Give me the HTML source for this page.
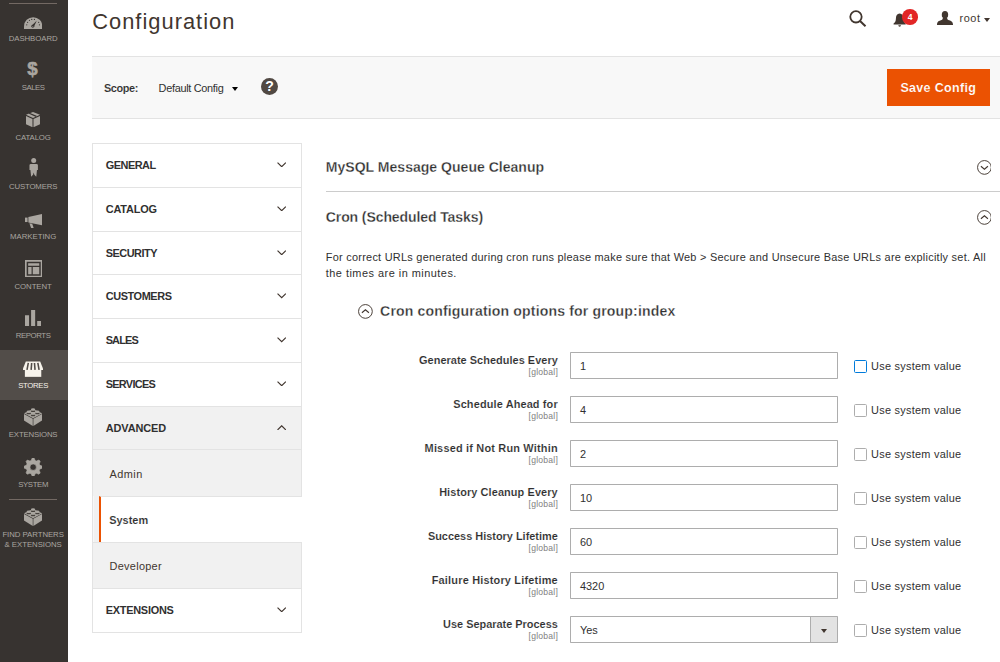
<!DOCTYPE html>
<html lang="en">
<head>
<meta charset="utf-8">
<title>Configuration / Settings / Stores / Magento Admin</title>
<style>
*{box-sizing:border-box;margin:0;padding:0}
html,body{width:1000px;height:662px;overflow:hidden;background:#fff}
body{font-family:"Liberation Sans","DejaVu Sans",sans-serif;color:#41362f;font-size:14px;line-height:1.36}
#root{position:absolute;left:0;top:0;width:1280px;height:848px;zoom:.78125;background:#fff;overflow:hidden}
.abs{position:absolute}
/* ---------- sidebar ---------- */
#menu{position:absolute;left:0;top:0;width:87px;height:848px;background:#373330}
#menu .it{position:absolute;left:0;width:87px;height:63.43px;text-align:center;color:#aaa6a0}
#menu .it.on{background:#524d49;color:#f7f3eb}
#menu .it svg{position:absolute;fill:#aaa6a0}
#menu .it.on svg{fill:#f7f3eb}
#menu .it span{position:absolute;left:0;width:84.8px;top:40.3px;font-size:10px;line-height:13px;text-transform:uppercase;white-space:nowrap}
#menu .it .dl{position:absolute;left:0;width:83.4px;top:6.6px;font-size:24px;line-height:28px;font-weight:700;text-align:center;-webkit-text-stroke:.7px #aaa6a0}
#menu .sep{position:absolute;left:11.6px;width:61.6px;height:1px;background:#736963}
/* ---------- header ---------- */
#title{position:absolute;left:118px;top:8px;font-size:28px;line-height:40px;font-weight:400;color:#41362f;letter-spacing:1.3px;white-space:nowrap}
/* ---------- action bar ---------- */
#bar{position:absolute;left:118px;top:72px;width:1170px;height:80px;background:#f8f8f8;border-top:1px solid #e3e3e3;border-bottom:1px solid #e3e3e3}
#save{-webkit-text-stroke:.2px #eb5202;position:absolute;left:1135px;top:88px;width:132px;height:48px;background:#eb5202;color:#fff;font-weight:700;font-size:16px;line-height:50px;text-align:center;letter-spacing:.4px}
/* ---------- config nav ---------- */
#nav{position:absolute;left:118px;top:183px;width:269px;border:1px solid #e3e3e3;background:#fff}
#nav .t{position:relative;height:56px;border-top:1px solid #e3e3e3;font-weight:700;font-size:14px;line-height:55px;padding-left:16px;color:#303030;letter-spacing:-.45px}
#nav .t:first-child{border-top:0;height:55px}
#nav .t svg{position:absolute;left:235px;top:23px;width:12px;height:7px;fill:none;stroke:#41362f;stroke-width:1.5}
#nav .t.open{background:#f1f1f1}
#nav .s{position:relative;background:#f1f1f1;border-top:1px solid #e3e3e3;height:59px;line-height:63.5px;padding-left:21px;font-size:14px;color:#41362f}
#nav .s.act{-webkit-text-stroke:.15px #fff;box-shadow:-7px 0 0 #f1f1f1;background:#fff;margin-left:7px;margin-right:-1px;border-left:3px solid #eb5202;padding-left:11px;font-weight:700;color:#303030;height:60px;line-height:59px}
/* ---------- content ---------- */
.sect{-webkit-text-stroke:.35px #fff;position:absolute;left:417px;font-size:18px;font-weight:700;color:#303030;line-height:24px;white-space:nowrap;letter-spacing:0}
.cir{position:absolute;width:18px;height:18px}
.cir circle{fill:#fff;stroke:#41362f;stroke-width:1.2}
.cir path{fill:none;stroke:#41362f;stroke-width:1.4}
#cmt{position:absolute;left:417px;top:319px;width:870px;font-size:14px;line-height:20.5px;color:#303030;letter-spacing:.33px;white-space:nowrap}
.row{position:absolute;left:417px;width:863px;height:44px}
.row .l{-webkit-text-stroke:.15px #fff;position:absolute;right:566px;top:.3px;text-align:right;font-weight:700;font-size:14px;line-height:19px;color:#303030;white-space:nowrap;letter-spacing:0}
.row .g{position:absolute;right:565.6px;top:19px;text-align:right;font-size:11px;line-height:15px;color:#808080;white-space:nowrap;letter-spacing:.3px}
.row .i{position:absolute;left:313px;top:0;width:343px;height:34.5px;border:1px solid #adadad;background:#fff;font-size:14px;line-height:34.6px;padding-left:11px;color:#303030;border-radius:1px}
.row .i b{position:absolute;right:0;top:0;bottom:0;width:35.5px;background:#e3e3e3;border-left:1px solid #adadad}
.row .i b:after{content:"";position:absolute;left:14px;top:14.5px;border:4.5px solid transparent;border-top:6px solid #41362f;border-bottom:0}
.row .c{position:absolute;left:676px;top:9.3px;width:17px;height:17px;border:1px solid #adadad;border-radius:2px;background:#fff}
.row .c.f{border-color:#007bdb}
.row .u{position:absolute;left:698px;top:8.4px;font-size:14px;line-height:20px;color:#303030;white-space:nowrap;letter-spacing:.33px}
</style>
</head>
<body>
<div id="root">

<div id="menu">
  <div class="sep" style="top:3.4px"></div>
  <div class="it" style="top:3.84px"><svg style="left:30.6px;top:17.900px;width:23.500px;height:16px" viewBox="0 0 24 16"><path d="M0 16v-4a12 12 0 0 1 24 0v4z"/><g fill="#373330"><circle cx="3.600" cy="10" r=".800"/><circle cx="4.700" cy="6.800" r=".800"/><circle cx="7.100" cy="4.200" r=".800"/><circle cx="10.100" cy="3" r=".800"/><circle cx="13.600" cy="3" r=".800"/><circle cx="19.200" cy="6.800" r=".800"/><circle cx="20.200" cy="10" r=".800"/><path d="M10.200 10.900L16.600 4.600 13 12.700z"/><circle cx="11.500" cy="11.900" r="1.900"/></g><ellipse cx="11.500" cy="12.100" rx="1" ry=".500"/></svg><span style="letter-spacing:-0.08px">Dashboard</span></div>
  <div class="it" style="top:67.27px"><b class="dl">$</b><span style="letter-spacing:-0.55px;top:39.1px">Sales</span></div>
  <div class="it" style="top:130.7px"><svg style="left:32.900px;top:12.400px;width:17.900px;height:19.500px" viewBox="0 0 19 20.700"><path d="M9.500 0L19 3.900 9.500 8.300 0 3.900z"/><path d="M0 5.300l8.800 4.100v11.300L0 16.500z"/><path d="M10.200 9.400L19 5.300v11.200l-8.800 4.200z"/><path d="M4.300 1.700l9.800 4.300" stroke="#373330" stroke-width="1.700"/></svg><span style="letter-spacing:-0.18px;top:39.1px">Catalog</span></div>
  <div class="it" style="top:194.13px"><svg style="left:36.7px;top:8.4px;width:12px;height:24px" viewBox="0 0 12 24"><circle cx="6" cy="3.300" r="3.200"/><path d="M.600 9.200Q.600 7.600 2.400 7.600H9.600Q11.400 7.600 11.400 9.200V15.500H10.200L9.300 24 6.800 21.500 6 18.500 5.200 21.500 2.700 24 1.800 15.500H.600z"/></svg><span style="letter-spacing:-0.23px;top:39.1px">Customers</span></div>
  <div class="it" style="top:257.56px"><svg style="left:31.9px;top:15.8px;width:22px;height:18.5px" viewBox="0 0 22 18.500"><path d="M4.300 3.900L22 0v14.600L4.300 10.900z"/><path d="M0 4.600h3.300v5.700H0z"/><path d="M5.600 11.700l3.600.800 1.900 5.400-3 .600z"/></svg><span style="letter-spacing:-0.03px;top:39.1px">Marketing</span></div>
  <div class="it" style="top:320.99px"><svg style="left:31.5px;top:11.4px;width:22.3px;height:22.3px" viewBox="0 0 22 22"><path d="M0 0h22v22H0zM2.100 2.100v17.800h17.800V2.100z" fill-rule="evenodd"/><path d="M4 4h14v3.300H4zM4 8.900h4.300V18H4zM9.800 8.900H18V18H9.800z"/></svg><span style="letter-spacing:-0.1px">Content</span></div>
  <div class="it" style="top:384.42px"><svg style="left:31.9px;top:12.1px;width:20.8px;height:21.2px" viewBox="0 0 20.800 21.200"><path d="M0 6.800h5.200v14.400H0zM7.800 0H13v21.200H7.800zM15.600 14.100h5.200v7.100h-5.200z"/></svg><span style="letter-spacing:-0.48px;top:39.1px">Reports</span></div>
  <div class="it on" style="top:447.85px;height:64.6px"><svg style="left:29.400px;top:14.400px;width:25.600px;height:20.300px" viewBox="0 0 25.600 20.300"><path d="M3.600.700h18.400l3.600 8.800v1.900H0V9.500z"/><path d="M2.400 11.300h21v9h-21z"/><g stroke="#524d49" stroke-width="2" fill="none"><path d="M6.800 2.500L5.100 11.400M11.100 2.500l-.700 8.900M14.700 2.500l.700 8.900M19 2.500l1.600 8.900"/></g></svg><span style="letter-spacing:-0.43px">Stores</span></div>
  <div class="it" style="top:511.28px"><svg style="left:30.6px;top:11.2px;width:23.2px;height:23px" viewBox="0 0 23.200 23"><path d="M11.600 1.200L23.200 6.800 11.600 13.100 0 6.800z"/><path d="M0 7.700l11.200 6.200V23L0 16z"/><path d="M12 13.900l11.200-6.200V16L12 23z"/><g fill="#46413d"><ellipse cx="11.600" cy="3.700" rx="2.900" ry="1.500"/><ellipse cx="6.100" cy="6.600" rx="2.900" ry="1.500"/><ellipse cx="17.100" cy="6.600" rx="2.900" ry="1.500"/><ellipse cx="11.600" cy="9.200" rx="2.900" ry="1.500"/></g><ellipse cx="11.600" cy="1.900" rx="2.700" ry="1.450"/><ellipse cx="6.100" cy="4.800" rx="2.700" ry="1.450"/><ellipse cx="17.100" cy="4.800" rx="2.700" ry="1.450"/><ellipse cx="11.600" cy="7.200" rx="2.700" ry="1.450"/><path d="M8.900 1.900h5.400v1.200H8.900zM3.400 4.800h5.400V6H3.400zM14.400 4.800h5.400V6h-5.400zM8.900 7.200h5.400v1.200H8.900z"/></svg><span style="letter-spacing:-0.22px;top:39.1px">Extensions</span></div>
  <div class="it" style="top:574.71px"><svg style="left:30.6px;top:11.7px;width:23.4px;height:23.4px" viewBox="0 0 23.400 23.400"><path fill-rule="evenodd" stroke="#aaa6a0" stroke-width=".8" stroke-linejoin="round" d="M9.10 3.29 L10.53 0.06 L12.87 0.06 L14.30 3.29 L15.81 3.92 L19.11 2.64 L20.76 4.29 L19.48 7.59 L20.11 9.10 L23.34 10.53 L23.34 12.87 L20.11 14.30 L19.48 15.81 L20.76 19.11 L19.11 20.76 L15.81 19.48 L14.30 20.11 L12.87 23.34 L10.53 23.34 L9.10 20.11 L7.59 19.48 L4.29 20.76 L2.64 19.11 L3.92 15.81 L3.29 14.30 L0.06 12.87 L0.06 10.53 L3.29 9.10 L3.92 7.59 L2.64 4.29 L4.29 2.64 L7.59 3.92Z M15.80 11.70 A4.1 4.1 0 1 0 7.60 11.70 A4.1 4.1 0 1 0 15.80 11.70Z"/></svg><span style="letter-spacing:-0.46px">System</span></div>
  <div class="sep" style="top:638.6px"></div>
  <div class="it" style="top:638.6px;height:76px"><svg style="left:30.6px;top:12.2px;width:23.2px;height:23px" viewBox="0 0 23.200 23"><path d="M11.600 1.200L23.200 6.800 11.600 13.100 0 6.800z"/><path d="M0 7.700l11.200 6.200V23L0 16z"/><path d="M12 13.900l11.200-6.200V16L12 23z"/><g fill="#46413d"><ellipse cx="11.600" cy="3.700" rx="2.900" ry="1.500"/><ellipse cx="6.100" cy="6.600" rx="2.900" ry="1.500"/><ellipse cx="17.100" cy="6.600" rx="2.900" ry="1.500"/><ellipse cx="11.600" cy="9.200" rx="2.900" ry="1.500"/></g><ellipse cx="11.600" cy="1.900" rx="2.700" ry="1.450"/><ellipse cx="6.100" cy="4.800" rx="2.700" ry="1.450"/><ellipse cx="17.100" cy="4.800" rx="2.700" ry="1.450"/><ellipse cx="11.600" cy="7.200" rx="2.700" ry="1.450"/><path d="M8.900 1.900h5.400v1.200H8.900zM3.400 4.800h5.400V6H3.400zM14.400 4.800h5.400V6h-5.400zM8.900 7.200h5.400v1.200H8.900z"/></svg><span style="top:39.4px;letter-spacing:-.06px;line-height:12.7px">Find Partners<br>&amp; Extensions</span></div>
</div>

<div id="title">Configuration</div>

<div id="bar"></div>
<div class="abs" style="left:133px;top:103.4px;font-weight:700;font-size:14px;line-height:20px;color:#303030;letter-spacing:-.5px;-webkit-text-stroke:.15px #f8f8f8">Scope:</div>
<div class="abs" style="left:203px;top:103.4px;font-size:14px;line-height:20px;color:#303030;letter-spacing:-.4px">Default Config</div>
<div id="save">Save Config</div>


<!-- header icons -->
<svg class="abs" style="left:1086px;top:12px;width:24px;height:24px" viewBox="0 0 24 24"><circle cx="10.200" cy="10" r="7.300" fill="none" stroke="#41362f" stroke-width="2.300"/><path d="M15.400 15.400l7 6.600" stroke="#41362f" stroke-width="2.600" fill="none"/></svg>
<svg class="abs" style="left:1143px;top:16.300px;width:17px;height:18.400px" viewBox="0 0 17 19"><path fill="#41362f" d="M8.500.500C5 .500 3.600 3.400 3.600 7c0 4-1.400 5.600-3.100 7v1.200h16V14c-1.700-1.400-3.100-3-3.100-7C13.400 3.400 12 .500 8.500.500zM6.700 16.300h3.600a1.800 1.800 0 0 1-3.600 0z"/></svg>
<div class="abs" style="left:1155px;top:11.400px;width:20px;height:20px;border-radius:10px;background:#e22626;color:#fff;font-weight:700;font-size:11px;line-height:21px;text-align:center">4</div>
<svg class="abs" style="left:1199px;top:14px;width:20.500px;height:18px" viewBox="0 0 20.500 18"><ellipse cx="10.200" cy="4.900" rx="4.100" ry="4.900" fill="#41362f"/><path fill="#41362f" d="M0 18c0-4.300 1.800-5.200 6.600-6.800l1-2.200h5.200l1 2.200c4.800 1.600 6.700 2.500 6.700 6.800z"/></svg>
<div class="abs" style="left:1228px;top:13.4px;font-size:14px;line-height:22px;color:#41362f;letter-spacing:.8px">root</div>
<div class="abs" style="left:1259.300px;top:22.500px;border:5px solid transparent;border-top:5.800px solid #41362f;border-bottom:0"></div>
<!-- scope caret + help -->
<div class="abs" style="left:297px;top:111.400px;border:4.200px solid transparent;border-top:5.200px solid #000;border-bottom:0"></div>
<div class="abs" style="left:334px;top:99.400px;width:22px;height:22px;border-radius:11px;background:#514943;color:#fff;font-weight:700;font-size:18px;line-height:22px;text-align:center">?</div>
<!-- collapse circles -->
<svg class="cir" style="left:1250px;top:204.600px;width:19px;height:19px" viewBox="0 0 19 19"><circle cx="9.500" cy="9.500" r="8.800"/><path d="M5 8l4.500 3.800L14 8"/></svg>
<svg class="cir" style="left:1250px;top:268.400px;width:19px;height:19px" viewBox="0 0 19 19"><circle cx="9.500" cy="9.500" r="8.800"/><path d="M5 11.200l4.500-3.800 4.500 3.800"/></svg>
<svg class="cir" style="left:457.800px;top:389.100px;width:19px;height:19px" viewBox="0 0 19 19"><circle cx="9.500" cy="9.500" r="8.800"/><path d="M5 11.200l4.500-3.800 4.500 3.800"/></svg>

<div id="nav">
  <div class="t" style="letter-spacing:-0.63px">GENERAL<svg viewBox="0 0 12 7"><path d="M.700.700L6 6l5.300-5.300"/></svg></div>
  <div class="t" style="letter-spacing:-0.23px">CATALOG<svg viewBox="0 0 12 7"><path d="M.700.700L6 6l5.300-5.300"/></svg></div>
  <div class="t" style="letter-spacing:-0.63px">SECURITY<svg viewBox="0 0 12 7"><path d="M.700.700L6 6l5.300-5.300"/></svg></div>
  <div class="t" style="letter-spacing:-0.53px">CUSTOMERS<svg viewBox="0 0 12 7"><path d="M.700.700L6 6l5.300-5.300"/></svg></div>
  <div class="t" style="letter-spacing:-1.1px">SALES<svg viewBox="0 0 12 7"><path d="M.700.700L6 6l5.300-5.300"/></svg></div>
  <div class="t" style="letter-spacing:-0.9px">SERVICES<svg viewBox="0 0 12 7"><path d="M.700.700L6 6l5.300-5.300"/></svg></div>
  <div class="t open" style="letter-spacing:-0.13px">ADVANCED<svg viewBox="0 0 12 7"><path d="M.700 6.300L6 1l5.300 5.300"/></svg></div>
  <div class="s" style="letter-spacing:.55px">Admin</div>
  <div class="s act">System</div>
  <div class="s" style="letter-spacing:.35px;height:58px;line-height:60.5px">Developer</div>
  <div class="t" style="letter-spacing:-.32px;height:57px">EXTENSIONS<svg viewBox="0 0 12 7"><path d="M.700.700L6 6l5.300-5.300"/></svg></div>
</div>

<div class="sect" style="top:202px">MySQL Message Queue Cleanup</div>
<div class="abs" style="left:417px;top:244.5px;width:870px;height:1px;background:#cccccc"></div>
<div class="sect" style="top:266px;letter-spacing:-.15px">Cron (Scheduled Tasks)</div>
<div id="cmt">For correct URLs generated during cron runs please make sure that Web &gt; Secure and Unsecure Base URLs are explicitly set. All<br><span style="letter-spacing:.62px">the times are in minutes.</span></div>
<div class="sect" style="left:486.5px;top:386.4px;letter-spacing:.2px">Cron configuration options for group:index</div>

<div class="row" style="top:451.00px"><div class="l" style="letter-spacing:0.05px">Generate Schedules Every</div><div class="g">[global]</div><div class="i">1</div><div class="c f"></div><div class="u">Use system value</div></div>
<div class="row" style="top:507.32px"><div class="l" style="letter-spacing:0.17px">Schedule Ahead for</div><div class="g">[global]</div><div class="i">4</div><div class="c"></div><div class="u">Use system value</div></div>
<div class="row" style="top:563.64px"><div class="l" style="letter-spacing:0.25px">Missed if Not Run Within</div><div class="g">[global]</div><div class="i">2</div><div class="c"></div><div class="u">Use system value</div></div>
<div class="row" style="top:619.96px"><div class="l" style="letter-spacing:0.13px">History Cleanup Every</div><div class="g">[global]</div><div class="i">10</div><div class="c"></div><div class="u">Use system value</div></div>
<div class="row" style="top:676.28px"><div class="l">Success History Lifetime</div><div class="g">[global]</div><div class="i">60</div><div class="c"></div><div class="u">Use system value</div></div>
<div class="row" style="top:732.60px"><div class="l" style="letter-spacing:0.25px">Failure History Lifetime</div><div class="g">[global]</div><div class="i">4320</div><div class="c"></div><div class="u">Use system value</div></div>
<div class="row" style="top:788.92px"><div class="l">Use Separate Process</div><div class="g">[global]</div><div class="i">Yes<b></b></div><div class="c"></div><div class="u">Use system value</div></div>

</div>
</body>
</html>
